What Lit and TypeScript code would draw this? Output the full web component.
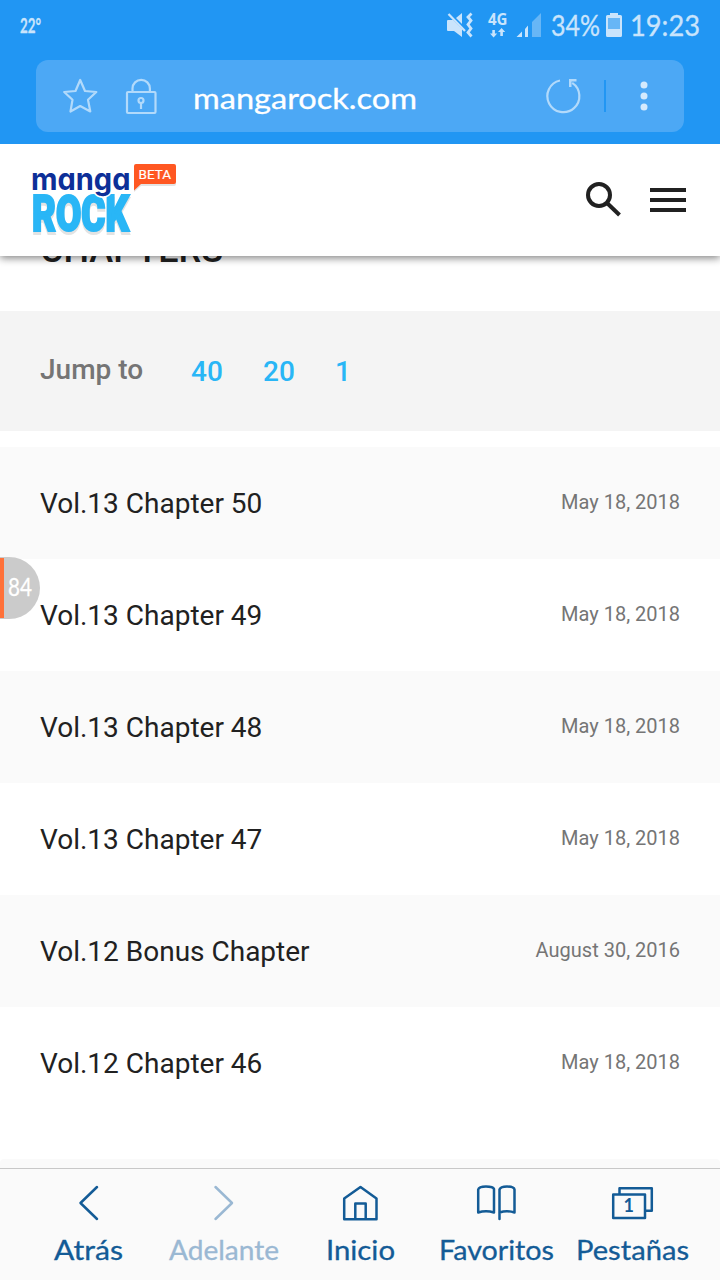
import { LitElement, html, svg, css } from "lit";
import { customElement } from "lit/decorators.js";

const icon = (x: number, y: number, w: number, h: number, body: unknown) =>
  html`<svg width=${w} height=${h} viewBox="${x} ${y} ${w} ${h}">${body}</svg>`;

// One line of text fitted to a given width, starting at the left edge.
const fitted = (text: string, w: number, h: number, base: number, size: number, weight = 400) =>
  html`<svg class="fit" width=${w} height=${h} viewBox="0 0 ${w} ${h}"><text x="0" y=${base} font-size=${size} font-weight=${weight} textLength=${w} lengthAdjust="spacingAndGlyphs" fill="currentColor" stroke="currentColor" stroke-width="0.3">${text}</text></svg>`;

const chapters = [
  ["Vol.13 Chapter 50", "May 18, 2018"],
  ["Vol.13 Chapter 49", "May 18, 2018"],
  ["Vol.13 Chapter 48", "May 18, 2018"],
  ["Vol.13 Chapter 47", "May 18, 2018"],
  ["Vol.12 Bonus Chapter", "August 30, 2016"],
  ["Vol.12 Chapter 46", "May 18, 2018"],
];

const tabs = [
  { label: "Atrás", w: 69, off: false, art: svg`<path d="M97 1187L80.500 1203L97 1219"/>`, x: 68 },
  { label: "Adelante", w: 110, off: true, art: svg`<path d="M215.500 1187L232 1203L215.500 1219"/>`, x: 204 },
  { label: "Inicio", w: 69, off: false, art: svg`<path d="M344.200 1219.300V1198.500L360.500 1187L376.500 1198.500V1219.300ZM355.300 1219V1203.500H365.700V1219"/>`, x: 340 },
  { label: "Favoritos", w: 115, off: false, art: svg`<path d="M494 1211.500V1189Q493 1186.500 486 1186.500Q479 1186.500 478.200 1189.500V1212.500Q486 1210 494 1212.500M499.500 1219V1189.500Q500.500 1186.500 507 1186.500Q514 1186.500 514.500 1189.500V1212.500Q507 1210 499.500 1212.500"/>`, x: 476 },
  { label: "Pestañas", w: 113, off: false, art: svg`<path d="M613.200 1194.500H645V1218H613.200ZM619.500 1194V1188.200H651.800V1210.800H646"/><text x="628.700" y="1212" text-anchor="middle" font-size="18" font-weight="700" stroke="none" fill="currentColor">1</text>`, x: 612 },
];

@customElement("app-root")
export class AppRoot extends LitElement {
  static styles = css`
    :host { display: block; width: 720px; height: 1280px; overflow: hidden; position: relative; background: #fff; font-family: Roboto, sans-serif; color: #212121; }
    * { box-sizing: border-box; }
    svg { display: block; flex: none; overflow: visible; }
    .screen { display: flex; flex-direction: column; height: 1280px; }
    .browser { height: 144px; flex: none; background: #2196f3; color: #c9e4fc; font-family: Lato, sans-serif; position: relative; z-index: 2; }
    .status { height: 60px; display: flex; align-items: flex-start; padding: 12px 20px 0 20px; }
    .icons { display: flex; margin-left: auto; }
    .net { margin-left: 16px; }
    .signal { margin-left: 9px; }
    .pct { margin-left: 10px; }
    .batt { margin-left: 6px; }
    .clock { margin-left: 8px; }
    .address { height: 72px; margin: 0 36px; border-radius: 12px; background: #4ca8f5; display: flex; align-items: center; padding: 0 35px 0 26px; }
    .lock { margin-left: 27px; }
    .host { margin-left: 35px; color: #fff; }
    .reload { margin-left: auto; }
    .rule { width: 2px; height: 32px; background: #2196f3; margin-left: 22px; }
    .more { margin-left: 33px; }
    .site { height: 112px; flex: none; background: #fff; box-shadow: 0 2px 8px rgba(0,0,0,.5); position: relative; z-index: 1; display: flex; align-items: center; padding: 0 34px 0 32px; }
    .search { margin-left: auto; }
    .menu { margin-left: 28px; }
    .heading { height: 55px; flex: none; display: flex; align-items: flex-end; padding: 0 0 40px 40px; font-weight: 500; font-size: 36px; line-height: 42px; }
    .jump { height: 120px; flex: none; background: #f4f4f4; display: flex; align-items: center; padding: 0 40px; font-size: 28px; line-height: 36px; font-weight: 500; color: #29b6f6; margin-bottom: 16px; }
    .jump .lead { color: #757575; width: 151px; padding-bottom: 2px; }
    .jump a { width: 72px; padding-top: 1px; }
    .row { height: 112px; flex: none; display: flex; align-items: center; justify-content: space-between; padding: 0 40px; font-size: 28px; line-height: 36px; }
    .row:nth-child(odd) { background: #fafafa; }
    .date { font-size: 20px; color: #757575; padding-bottom: 3px; }
    .title { padding-top: 1px; }
    .list { height: 712px; flex: none; }
    .next { height: 9px; flex: none; background: #fafafa; border-radius: 4px 4px 0 0; }
    .nav { height: 112px; flex: none; background: #fafafa; border-top: 1px solid #c8c8c8; display: grid; grid-template-columns: repeat(5, 136px); padding: 14px 20px 0; font-family: Lato, sans-serif; color: #135b96; }
    .tab { display: flex; flex-direction: column; align-items: center; gap: 12px; }
    .tab.off { color: #9ab8d3; }
    .glyph { fill: none; stroke: currentColor; stroke-width: 2.5; stroke-linejoin: round; stroke-linecap: round; }
    .bubble { position: absolute; left: 0; top: 557px; width: 40px; height: 62px; z-index: 2; background: #cbcbcb; border-radius: 0 31px 31px 0; display: flex; align-items: center; color: #fff; font-family: Lato, sans-serif; }
    .bubble i { width: 4px; height: 60px; background: #ff7139; margin-right: 4px; }
    .manga { font-family: Inter, sans-serif; font-feature-settings: "cv11"; }
    .rock { font-family: Roboto, sans-serif; filter: drop-shadow(0 3px 0 #e3e3e3); }
  `;

  render() {
    return html`
      <div class="screen">
        <div class="browser">
          <div class="status">
            ${fitted("22°", 21, 24, 21, 21, 700)}
            <div class="icons">
              ${icon(446, 12, 26, 26, svg`<g fill="#c9e4fc"><path d="M448 20H453L462 29V37L454 31H448Q447 31 447 30V21Q447 20 448 20Z"/><path d="M456 18L462 13V24Z"/></g><path d="M448.500 14L465 31" stroke="#c9e4fc" stroke-width="2.300"/><path d="M471.500 13.500l-3.500 3.500 3 3.500-3 4 3 4-3 4 3.500 4" fill="none" stroke="#c9e4fc" stroke-width="2.800"/>`)}
              <div class="net">${icon(488, 12, 20, 26, svg`<text x="488" y="25" font-size="15.500" font-weight="700" textLength="19.500" lengthAdjust="spacingAndGlyphs" fill="#c9e4fc" font-family="Noto Sans">4G</text><path d="M492.300 30h2.600v3.500h2.300l-3.600 4-3.600-4h2.300zM500.300 36h2.600v-4h2.300l-3.600-4-3.600 4h2.300z" fill="#c9e4fc"/>`)}</div>
              <div class="signal">${icon(517, 12, 24, 26, svg`<path d="M516.500 37L522 31.500V37ZM525 29L528 25.500V37H525Z" fill="#c9e4fc"/><path d="M532 22L541 13V37H532Z" fill="#67b6f6"/>`)}</div>
              <div class="pct">${fitted("34%", 49, 26, 24, 28)}</div>
              <div class="batt">${icon(606, 12, 16, 26, svg`<path d="M610 15V13H618V15H620.500Q622 15 622 16.500V35.500Q622 37 620.500 37H607.500Q606 37 606 35.500V16.500Q606 15 607.500 15Z" fill="#c9e4fc"/><path d="M608 18H620V29H608Z" fill="#67b6f6"/>`)}</div>
              <div class="clock">${fitted("19:23", 70, 26, 24, 28)}</div>
            </div>
          </div>
          <div class="address">
            ${icon(62, 78, 36, 36, svg`<path d="M80.200 80L85 91L96.300 92L88 99.800L90.300 111.500L80.200 106L70.500 111.500L72.500 99.800L64.200 92L75.500 91Z" fill="none" stroke="#b2dafb" stroke-width="2.200" stroke-linejoin="round"/>`)}
            <div class="lock">${icon(125, 78, 33, 36, svg`<g fill="none" stroke="#b2dafb" stroke-width="2.200"><rect x="127" y="92" width="28.500" height="21" rx="1"/><path d="M132.500 92V88.500A8.700 8.700 0 0 1 149.900 88.500V92"/><circle cx="141" cy="100.500" r="2.500"/><path d="M141 103V109"/></g>`)}</div>
            <div class="host">${fitted("mangarock.com", 224, 36, 31, 29)}</div>
            <div class="reload">${icon(546, 78, 36, 36, svg`<path d="M560 80.500A16 16 0 1 0 572.200 82.800" fill="none" stroke="#b2dafb" stroke-width="2.200"/><path d="M569 79H576.500V81.500H571.500V87H569Z" fill="#b2dafb"/>`)}</div>
            <div class="rule"></div>
            <div class="more">${icon(639, 78, 10, 36, svg`<g fill="#d4eafd"><circle cx="644" cy="85" r="3.500"/><circle cx="644" cy="96" r="3.500"/><circle cx="644" cy="107" r="3.500"/></g>`)}</div>
          </div>
        </div>
        <header class="site">
          ${icon(32, 164, 145, 72, svg`
            <text class="rock" x="32" y="231" font-size="49.500" font-weight="900" textLength="97" lengthAdjust="spacingAndGlyphs" fill="#29b6f6" stroke="#29b6f6" stroke-width="2.200">ROCK</text>
            <text class="manga" x="31" y="190" font-size="30.500" font-weight="700" textLength="99.500" lengthAdjust="spacingAndGlyphs" fill="#0d2f98" stroke="#fff" stroke-width="3" paint-order="stroke">manga</text>
            <path d="M136 165H174Q176 165 176 167V184Q176 186 174 186H141L134 192V167Q134 165 136 165Z" fill="#e3e3e3"/>
            <path d="M136 164H174Q176 164 176 166V182Q176 184 174 184H141L134 190.500V166Q134 164 136 164Z" fill="#ff5722"/>
            <text x="138.500" y="178.500" font-size="13" font-weight="400" textLength="32.500" lengthAdjust="spacingAndGlyphs" fill="#fff" stroke="#fff" stroke-width=".2">BETA</text>`)}
          <div class="search">${icon(586, 182, 36, 36, svg`<g fill="none" stroke="#212121" stroke-width="4"><circle cx="599" cy="195" r="11"/><path d="M606.500 202.500L619.500 215"/></g>`)}</div>
          <div class="menu">${icon(650, 182, 36, 36, svg`<path d="M650 188h36v4h-36zM650 198h36v4h-36zM650 208h36v4h-36z" fill="#212121"/>`)}</div>
        </header>
        <div class="heading">CHAPTERS</div>
        <div class="jump"><span class="lead">Jump to</span><a>40</a><a>20</a><a>1</a></div>
        <div class="list">
          ${chapters.map(([t, d]) => html`<div class="row"><span class="title">${t}</span><span class="date">${d}</span></div>`)}
        </div>
        <div class="next"></div>
        <nav class="nav">
          ${tabs.map(t => html`<div class="tab ${t.off ? "off" : ""}"><div class="glyph">${icon(t.x, 1183, 40, 40, t.art)}</div>${fitted(t.label, t.w, 32, 25, 26)}</div>`)}
        </nav>
      </div>
      <div class="bubble"><i></i>${fitted("84", 24, 28, 22, 25)}</div>
    `;
  }
}
